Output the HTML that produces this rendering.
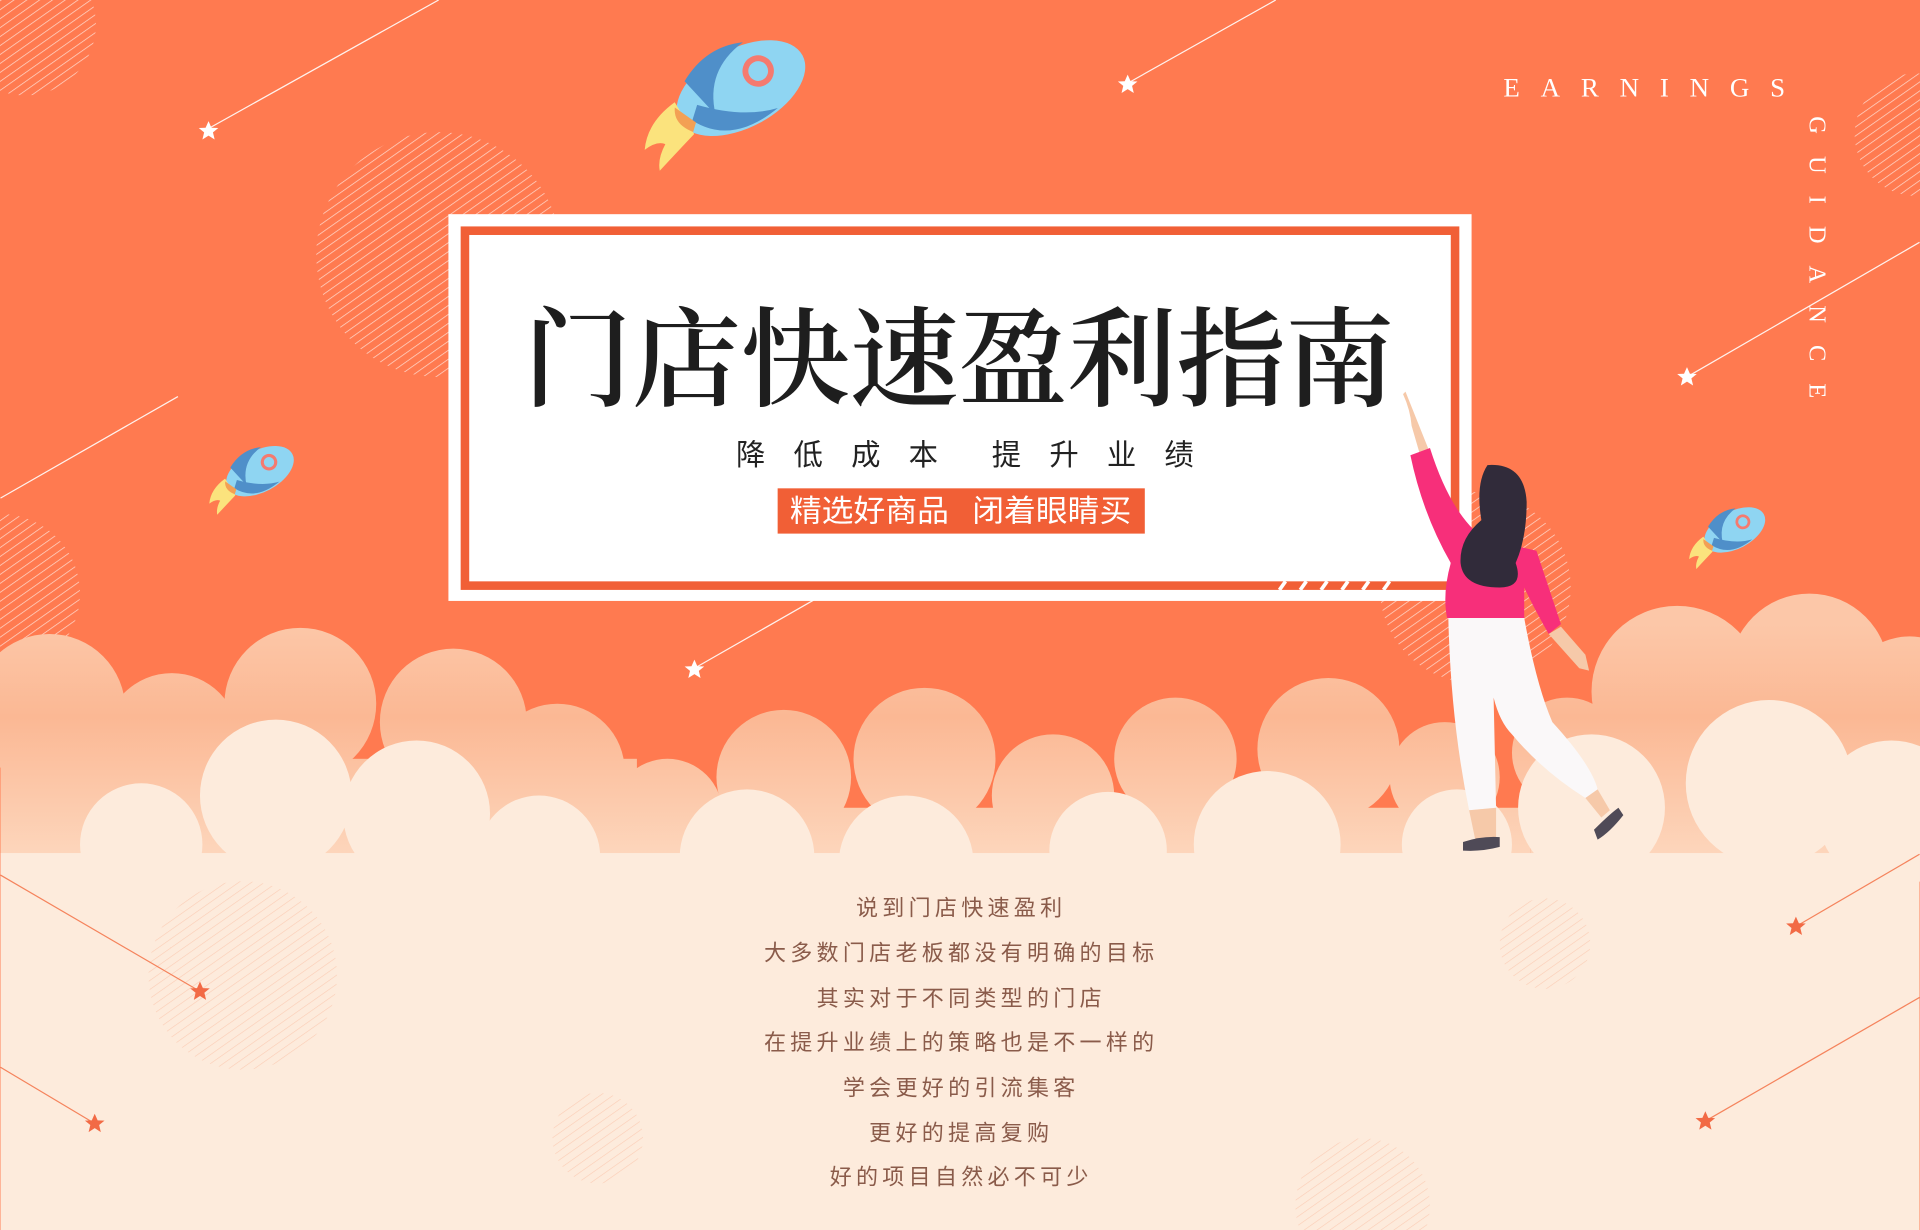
<!DOCTYPE html>
<html><head><meta charset="utf-8"><style>
html,body{margin:0;padding:0;width:1920px;height:1230px;overflow:hidden;background:#FF7A50}
svg{display:block}
</style></head><body>
<svg width="1920" height="1230" viewBox="0 0 1568 1005" xmlns="http://www.w3.org/2000/svg">
<defs>
<pattern id="hw" width="6" height="6" patternUnits="userSpaceOnUse" patternTransform="rotate(-35)"><line x1="0" y1="0" x2="6" y2="0" stroke="#fff" stroke-width="1.2" opacity="0.7"/></pattern>
<pattern id="ho" width="6" height="6" patternUnits="userSpaceOnUse" patternTransform="rotate(-35)"><line x1="0" y1="0" x2="6" y2="0" stroke="#F8B79A" stroke-width="1" opacity="0.6"/></pattern>
<linearGradient id="cg" gradientUnits="userSpaceOnUse" x1="0" y1="510" x2="0" y2="700"><stop offset="0" stop-color="#FCC7A8"/><stop offset="0.4" stop-color="#FBB894"/><stop offset="1" stop-color="#FDD6BC"/></linearGradient>
<g id="star"><polygon points="0,-8 2.4,-2.6 8,-2.4 3.6,1.2 5,7 0,3.8 -5,7 -3.6,1.2 -8,-2.4 -2.4,-2.6"/></g>
<g id="rocket">
<ellipse cx="0" cy="0" rx="60" ry="34" fill="#8FD5F2"/>
<path d="M-40,-28 Q-10,-46 20,-34 Q-20,-28 -30,10 Z" fill="#4F8FC9"/>
<path d="M-50,5 Q-30,40 20,30 Q-10,24 -40,-5 Z" fill="#4F8FC9"/>
<circle cx="20" cy="-6" r="11" fill="none" stroke="#F57A6F" stroke-width="5"/>
<path d="M-56,-16 Q-85,-12 -98,8 Q-85,6 -80,12 Q-92,20 -95,30 Q-72,22 -54,16 Z" fill="#FBE37D"/>
<path d="M-58,-12 Q-66,0 -54,14 L-48,8 Z" fill="#F3A054"/>
</g>
</defs>
<rect width="1568" height="1005" fill="#FF7A50"/>
<circle cx="20" cy="20" r="58" fill="url(#hw)"/>
<circle cx="358" cy="208" r="100" fill="url(#hw)"/>
<circle cx="1565" cy="110" r="50" fill="url(#hw)"/>
<circle cx="0" cy="485" r="65" fill="url(#hw)"/>
<circle cx="1205" cy="480" r="78" fill="url(#hw)"/>
<g stroke="#fff" stroke-width="1" opacity="0.9">
<line x1="170" y1="105" x2="358" y2="0"/><line x1="921" y1="68" x2="1042" y2="0"/>
<line x1="1378" y1="308" x2="1568" y2="198"/><line x1="567" y1="546" x2="665" y2="490"/>
<line x1="0" y1="407" x2="145" y2="324"/>
</g>
<g fill="#fff">
<use href="#star" x="170" y="107"/><use href="#star" x="921" y="69"/><use href="#star" x="1378" y="308"/><use href="#star" x="567" y="547"/>
</g>
<g transform="translate(605,72) rotate(-28) scale(0.95)"><use href="#rocket"/></g>
<g transform="translate(212,385) rotate(-28) scale(0.5)"><use href="#rocket"/></g>
<g transform="translate(1417,433) rotate(-28) scale(0.45)"><use href="#rocket"/></g>
<g fill="url(#cg)">
<circle cx="40" cy="580" r="62"/><circle cx="140" cy="605" r="55"/><circle cx="245" cy="575" r="62"/><circle cx="370" cy="590" r="60"/>
<circle cx="455" cy="630" r="55"/><circle cx="545" cy="665" r="45"/><circle cx="640" cy="635" r="55"/><circle cx="755" cy="620" r="58"/>
<circle cx="860" cy="650" r="50"/><circle cx="960" cy="620" r="50"/><circle cx="1085" cy="612" r="58"/><circle cx="1180" cy="635" r="45"/>
<circle cx="1370" cy="565" r="70"/><circle cx="1478" cy="550" r="65"/><circle cx="1560" cy="575" r="55"/><circle cx="1280" cy="615" r="45"/>
<rect x="0" y="620" width="520" height="100"/><rect x="1250" y="590" width="318" height="130"/><rect x="520" y="660" width="730" height="60"/>
</g>
<g fill="#FDEBDC">
<circle cx="115" cy="690" r="50"/><circle cx="225" cy="650" r="62"/><circle cx="340" cy="665" r="60"/><circle cx="440" cy="700" r="50"/>
<circle cx="610" cy="700" r="55"/><circle cx="740" cy="705" r="55"/><circle cx="905" cy="695" r="48"/><circle cx="1035" cy="690" r="60"/>
<circle cx="1190" cy="690" r="45"/><circle cx="1300" cy="660" r="60"/><circle cx="1445" cy="640" r="68"/><circle cx="1545" cy="665" r="60"/>
<rect x="0" y="697" width="1568" height="308"/>
</g>
<circle cx="198" cy="797" r="77" fill="url(#ho)"/><circle cx="488" cy="930" r="37" fill="url(#ho)"/>
<circle cx="1262" cy="771" r="37" fill="url(#ho)"/><circle cx="1113" cy="985" r="55" fill="url(#ho)"/>
<g stroke="#F5835C" stroke-width="1">
<line x1="0" y1="715" x2="163" y2="810"/><line x1="0" y1="872" x2="77" y2="918"/>
<line x1="1467" y1="757" x2="1568" y2="698"/><line x1="1393" y1="916" x2="1568" y2="815"/>
</g>
<g fill="#F26A45"><use href="#star" x="163" y="810"/><use href="#star" x="77" y="918"/><use href="#star" x="1467" y="757"/><use href="#star" x="1393" y="916"/></g>
<rect x="366" y="175" width="836" height="316" fill="#fff"/>
<rect x="379.5" y="188.5" width="809" height="290" fill="none" stroke="#F15F36" stroke-width="7"/>
<g stroke="#fff" stroke-width="3"><line x1="1045" y1="482" x2="1050" y2="475"/><line x1="1062" y1="482" x2="1067" y2="475"/><line x1="1079" y1="482" x2="1084" y2="475"/><line x1="1096" y1="482" x2="1101" y2="475"/><line x1="1113" y1="482" x2="1118" y2="475"/><line x1="1130" y1="482" x2="1135" y2="475"/></g>
<text x="783" y="325" text-anchor="middle" font-family="Liberation Serif,'Noto Serif CJK SC',serif" font-size="88" font-weight="600" fill="#1E1E1E" textLength="712" lengthAdjust="spacingAndGlyphs">门店快速盈利指南</text>
<g font-family="Liberation Sans,'Noto Sans CJK SC',sans-serif" font-size="24" fill="#222">
<text x="601" y="380" textLength="165" lengthAdjust="spacing">降低成本</text>
<text x="810" y="380" textLength="165" lengthAdjust="spacing">提升业绩</text>
</g>
<rect x="635" y="399" width="300" height="37" fill="#F15F36"/>
<g font-family="Liberation Sans,'Noto Sans CJK SC',sans-serif" font-size="25" fill="#fff">
<text x="645" y="426" textLength="130" lengthAdjust="spacingAndGlyphs">精选好商品</text>
<text x="794" y="426" textLength="130" lengthAdjust="spacingAndGlyphs">闭着眼睛买</text>
</g>
<text x="1228" y="79" font-family="Liberation Serif,serif" font-size="22" fill="#fff" letter-spacing="17">EARNINGS</text>
<text x="1478" y="95" transform="rotate(90 1478 95)" font-family="Liberation Serif,serif" font-size="20" fill="#fff" letter-spacing="18">GUIDANCE</text>
<path d="M1146,322 Q1152,335 1153,348 L1160,372 L1168,370 L1158,345 Q1152,330 1148,320 Z" fill="#F6C9A9"/>
<path d="M1152,372 L1168,366 Q1185,420 1212,440 L1255,450 Q1265,480 1275,510 L1265,518 Q1252,495 1245,480 L1245,505 Q1210,510 1182,505 Q1178,485 1185,460 Q1162,420 1152,372 Z" fill="#F72F7A"/>
<path d="M1275,512 L1295,535 L1298,548 L1290,546 L1265,518 Z" fill="#F6C9A9"/>
<path d="M1215,380 Q1245,378 1247,410 Q1247,440 1238,460 Q1245,480 1225,480 Q1195,480 1193,460 Q1192,440 1210,425 Q1205,395 1215,380 Z" fill="#312B3A"/>
<path d="M1183,505 L1245,505 Q1255,560 1268,590 Q1300,625 1305,645 L1295,652 Q1260,630 1235,600 Q1225,590 1220,570 L1222,660 L1200,662 Q1185,590 1183,505 Z" fill="#FAF8F9"/>
<path d="M1200,662 L1222,660 L1222,685 L1205,686 Z" fill="#F6C9A9"/>
<path d="M1195,688 Q1210,683 1225,684 L1225,692 Q1210,696 1195,695 Z" fill="#4F4A57"/>
<path d="M1295,652 L1305,645 L1315,662 L1308,668 Z" fill="#F6C9A9"/>
<path d="M1302,678 Q1315,665 1322,660 L1326,666 Q1315,680 1305,686 Z" fill="#4F4A57"/>
<g font-family="Liberation Sans,'Noto Sans CJK SC',sans-serif" font-size="18" fill="#8A5B4A" text-anchor="middle" letter-spacing="3.5">
<text x="785" y="748">说到门店快速盈利</text>
<text x="785" y="785">大多数门店老板都没有明确的目标</text>
<text x="785" y="822">其实对于不同类型的门店</text>
<text x="785" y="858">在提升业绩上的策略也是不一样的</text>
<text x="785" y="895">学会更好的引流集客</text>
<text x="785" y="932">更好的提高复购</text>
<text x="785" y="968">好的项目自然必不可少</text>
</g>
</svg>
</body></html>
